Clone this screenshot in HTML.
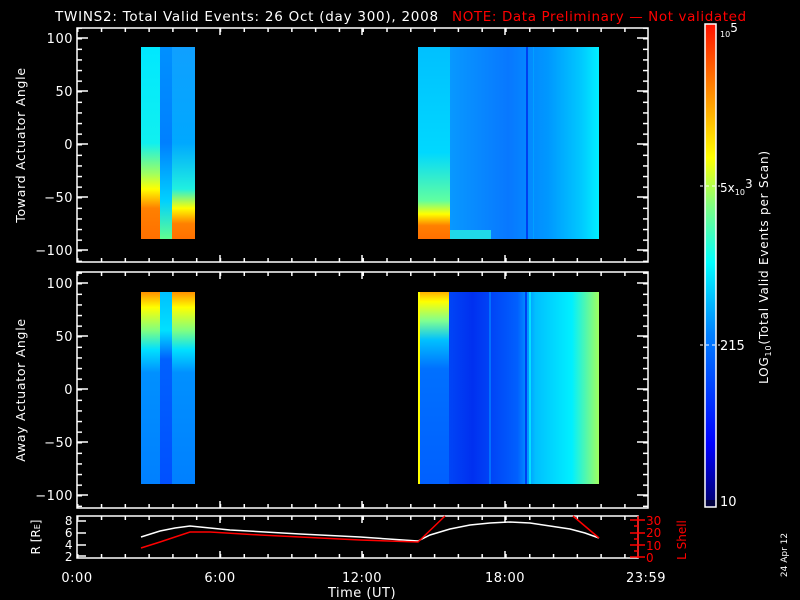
<!DOCTYPE html>
<html><head><meta charset="utf-8"><style>
html,body{margin:0;padding:0;background:#000;width:800px;height:600px;overflow:hidden}
svg{display:block}
text{font-family:"DejaVu Sans","Liberation Sans",sans-serif;fill:#fff}
</style></head><body>
<svg width="800" height="600" viewBox="0 0 800 600" xmlns="http://www.w3.org/2000/svg">
<defs>
<linearGradient id="cb" x1="0" y1="1" x2="0" y2="0">
<stop offset="0" stop-color="#00007a"/><stop offset="0.12" stop-color="#0000ff"/>
<stop offset="0.35" stop-color="#0080ff"/><stop offset="0.5" stop-color="#00ffff"/>
<stop offset="0.62" stop-color="#80ff80"/><stop offset="0.72" stop-color="#ffff00"/>
<stop offset="0.87" stop-color="#ff8000"/><stop offset="1" stop-color="#ff1000"/>
</linearGradient>
<linearGradient id="t1a" x1="0" y1="0" x2="0" y2="1">
<stop offset="0" stop-color="#00e8ff"/><stop offset="0.5" stop-color="#10f0f0"/>
<stop offset="0.66" stop-color="#a0ff60"/><stop offset="0.74" stop-color="#ffff00"/>
<stop offset="0.84" stop-color="#ff8000"/><stop offset="1" stop-color="#ff7000"/>
</linearGradient>
<linearGradient id="t1b" x1="0" y1="0" x2="0" y2="1">
<stop offset="0" stop-color="#0090ff"/><stop offset="0.5" stop-color="#0080ff"/>
<stop offset="0.8" stop-color="#00d0ff"/><stop offset="1" stop-color="#60ff90"/>
</linearGradient>
<linearGradient id="t1c" x1="0" y1="0" x2="0" y2="1">
<stop offset="0" stop-color="#10a0ff"/><stop offset="0.5" stop-color="#00a8ff"/>
<stop offset="0.74" stop-color="#20f0e0"/><stop offset="0.84" stop-color="#ffff00"/>
<stop offset="0.92" stop-color="#ff8000"/><stop offset="1" stop-color="#ff7000"/>
</linearGradient>
<linearGradient id="t2" x1="0" y1="0" x2="1" y2="0">
<stop offset="0" stop-color="#00c8ff"/><stop offset="0.18" stop-color="#0898ff"/>
<stop offset="0.5" stop-color="#0878ff"/><stop offset="0.72" stop-color="#0098ff"/>
<stop offset="0.9" stop-color="#00c8ff"/><stop offset="1" stop-color="#00f0ff"/>
</linearGradient>
<linearGradient id="t2l" x1="0" y1="0" x2="0" y2="1">
<stop offset="0" stop-color="#00c0ff"/><stop offset="0.55" stop-color="#00d8ff"/>
<stop offset="0.8" stop-color="#60ffa0"/><stop offset="0.87" stop-color="#ffff00"/>
<stop offset="0.93" stop-color="#ff8000"/><stop offset="1" stop-color="#ff7000"/>
</linearGradient>
<linearGradient id="fadeL" x1="0" y1="0" x2="1" y2="0">
<stop offset="0" stop-color="#00c8ff" stop-opacity="0"/><stop offset="1" stop-color="#0898ff" stop-opacity="0"/>
</linearGradient>
<linearGradient id="b1" x1="0" y1="0" x2="0" y2="1">
<stop offset="0" stop-color="#ff9000"/><stop offset="0.08" stop-color="#ffff00"/>
<stop offset="0.2" stop-color="#80ff80"/><stop offset="0.3" stop-color="#00e0ff"/>
<stop offset="0.42" stop-color="#0090ff"/><stop offset="1" stop-color="#0080ff"/>
</linearGradient>
<linearGradient id="b1m" x1="0" y1="0" x2="0" y2="1">
<stop offset="0" stop-color="#00c0ff"/><stop offset="0.2" stop-color="#00e0ff"/>
<stop offset="0.35" stop-color="#0060ff"/><stop offset="1" stop-color="#0050ff"/>
</linearGradient>
<linearGradient id="b2" x1="0" y1="0" x2="1" y2="0">
<stop offset="0" stop-color="#0060ff"/><stop offset="0.3" stop-color="#0030f0"/>
<stop offset="0.55" stop-color="#0060ff"/><stop offset="0.65" stop-color="#00c0ff"/>
<stop offset="0.85" stop-color="#00f0ff"/><stop offset="1" stop-color="#a0ff60"/>
</linearGradient>
<linearGradient id="b2l" x1="0" y1="0" x2="0" y2="1">
<stop offset="0" stop-color="#ffb000"/><stop offset="0.05" stop-color="#ffff00"/>
<stop offset="0.15" stop-color="#80ff90"/><stop offset="0.25" stop-color="#00c0ff"/>
<stop offset="0.4" stop-color="#0070ff"/><stop offset="1" stop-color="#0060ff"/>
</linearGradient>
<pattern id="xt" x="77" y="0" width="23.79" height="600" patternUnits="userSpaceOnUse">
<rect x="0" y="0" width="1.5" height="600" fill="#fff"/></pattern>
<pattern id="yt1" x="0" y="38" width="800" height="10.6" patternUnits="userSpaceOnUse">
<rect x="0" y="0" width="800" height="1.5" fill="#fff"/></pattern>
<pattern id="yt2" x="0" y="283" width="800" height="10.6" patternUnits="userSpaceOnUse">
<rect x="0" y="0" width="800" height="1.5" fill="#fff"/></pattern>
</defs>

<text x="55" y="21" font-size="13.5" letter-spacing="0.75">TWINS2: Total Valid Events: 26 Oct (day 300), 2008</text>
<text x="452" y="21" font-size="13.5" letter-spacing="0.6" style="fill:#ff0000">NOTE: Data Preliminary — Not validated</text>

<rect x="141" y="47" width="19" height="192" fill="url(#t1a)"/>
<rect x="160" y="47" width="12" height="192" fill="url(#t1b)"/>
<rect x="172" y="47" width="23" height="192" fill="url(#t1c)"/>
<rect x="418" y="47" width="181" height="192" fill="url(#t2)"/>
<rect x="418" y="47" width="32" height="192" fill="url(#t2l)"/>
<rect x="450" y="230" width="41" height="9" fill="#20d8e8"/>
<rect x="526" y="47" width="2" height="192" fill="#0040f0"/>
<rect x="533" y="47" width="1" height="192" fill="#00a0ff"/>

<rect x="141" y="292" width="54" height="192" fill="url(#b1)"/>
<rect x="160" y="292" width="12" height="192" fill="url(#b1m)"/>
<rect x="418" y="292" width="181" height="192" fill="url(#b2)"/>
<rect x="418" y="292" width="31" height="192" fill="url(#b2l)"/>
<rect x="418" y="292" width="2" height="192" fill="#ffff00"/>
<rect x="489" y="292" width="2" height="192" fill="#0070ff"/>
<rect x="525" y="292" width="2" height="192" fill="#0040f0"/>
<rect x="529" y="292" width="2" height="192" fill="#00e0ff"/>

<g fill="none" stroke="#fff" stroke-width="1.5">
<rect x="77" y="28" width="571" height="234"/>
<rect x="77" y="272" width="571" height="236"/>
<rect x="77" y="516" width="561" height="42"/>
</g>
<rect x="77" y="28" width="5" height="234" fill="url(#yt1)"/>
<rect x="643" y="28" width="5" height="234" fill="url(#yt1)"/>
<rect x="77" y="272" width="5" height="236" fill="url(#yt2)"/>
<rect x="643" y="272" width="5" height="236" fill="url(#yt2)"/>
<g stroke="#fff" stroke-width="1.5">
<line x1="77" y1="38" x2="88" y2="38"/><line x1="77" y1="91" x2="88" y2="91"/><line x1="77" y1="144" x2="88" y2="144"/><line x1="77" y1="197" x2="88" y2="197"/><line x1="77" y1="250" x2="88" y2="250"/>
<line x1="637" y1="38" x2="648" y2="38"/><line x1="637" y1="91" x2="648" y2="91"/><line x1="637" y1="144" x2="648" y2="144"/><line x1="637" y1="197" x2="648" y2="197"/><line x1="637" y1="250" x2="648" y2="250"/>
<line x1="77" y1="283" x2="88" y2="283"/><line x1="77" y1="336" x2="88" y2="336"/><line x1="77" y1="389" x2="88" y2="389"/><line x1="77" y1="442" x2="88" y2="442"/><line x1="77" y1="495" x2="88" y2="495"/>
<line x1="637" y1="283" x2="648" y2="283"/><line x1="637" y1="336" x2="648" y2="336"/><line x1="637" y1="389" x2="648" y2="389"/><line x1="637" y1="442" x2="648" y2="442"/><line x1="637" y1="495" x2="648" y2="495"/>
</g>
<rect x="77" y="28" width="571" height="4" fill="url(#xt)"/>
<rect x="77" y="258" width="571" height="4" fill="url(#xt)"/>
<rect x="77" y="272" width="571" height="4" fill="url(#xt)"/>
<rect x="77" y="504" width="571" height="4" fill="url(#xt)"/>
<rect x="77" y="516" width="561" height="4" fill="url(#xt)"/>
<rect x="77" y="554" width="561" height="4" fill="url(#xt)"/>
<g stroke="#fff" stroke-width="1.5">
<line x1="220" y1="28" x2="220" y2="35"/><line x1="362" y1="28" x2="362" y2="35"/><line x1="505" y1="28" x2="505" y2="35"/>
<line x1="220" y1="255" x2="220" y2="262"/><line x1="362" y1="255" x2="362" y2="262"/><line x1="505" y1="255" x2="505" y2="262"/>
<line x1="220" y1="272" x2="220" y2="279"/><line x1="362" y1="272" x2="362" y2="279"/><line x1="505" y1="272" x2="505" y2="279"/>
<line x1="220" y1="501" x2="220" y2="508"/><line x1="362" y1="501" x2="362" y2="508"/><line x1="505" y1="501" x2="505" y2="508"/>
<line x1="220" y1="516" x2="220" y2="523"/><line x1="362" y1="516" x2="362" y2="523"/><line x1="505" y1="516" x2="505" y2="523"/>
<line x1="220" y1="551" x2="220" y2="558"/><line x1="362" y1="551" x2="362" y2="558"/><line x1="505" y1="551" x2="505" y2="558"/>
<line x1="77" y1="521" x2="86" y2="521"/><line x1="77" y1="533" x2="86" y2="533"/><line x1="77" y1="545" x2="86" y2="545"/><line x1="77" y1="556" x2="86" y2="556"/>
</g>
<g stroke="#ff0000" stroke-width="1.5">
<line x1="638" y1="516" x2="638" y2="558"/>
<line x1="630" y1="520" x2="645" y2="520"/><line x1="630" y1="533" x2="645" y2="533"/><line x1="630" y1="545" x2="645" y2="545"/><line x1="630" y1="557" x2="645" y2="557"/>
<line x1="634" y1="526" x2="638" y2="526"/><line x1="634" y1="539" x2="638" y2="539"/><line x1="634" y1="551" x2="638" y2="551"/>
</g>

<g font-size="13" text-anchor="end" letter-spacing="0.5">
<text x="73" y="43">100</text><text x="73" y="96">50</text><text x="73" y="149">0</text><text x="73" y="202">−50</text><text x="73" y="255">−100</text>
<text x="73" y="288">100</text><text x="73" y="341">50</text><text x="73" y="394">0</text><text x="73" y="447">−50</text><text x="73" y="500">−100</text>
<text x="73" y="525" font-size="12">8</text><text x="73" y="537" font-size="12">6</text><text x="73" y="549" font-size="12">4</text><text x="73" y="561" font-size="12">2</text>
</g>
<g font-size="12">
<text x="646" y="525" style="fill:#ff0000">30</text><text x="646" y="537" style="fill:#ff0000">20</text><text x="646" y="550" style="fill:#ff0000">10</text><text x="646" y="562" style="fill:#ff0000">0</text>
<text transform="translate(686,540) rotate(-90)" text-anchor="middle" font-size="12" style="fill:#ff0000">L Shell</text>
</g>
<text transform="translate(25,145) rotate(-90)" text-anchor="middle" font-size="12.5" letter-spacing="0.7">Toward Actuator Angle</text>
<text transform="translate(25,390) rotate(-90)" text-anchor="middle" font-size="12.5" letter-spacing="0.7">Away Actuator Angle</text>
<text transform="translate(40,537) rotate(-90)" text-anchor="middle" font-size="12">R [R<tspan font-size="8">E</tspan>]</text>

<g font-size="13" text-anchor="middle" letter-spacing="0.5">
<text x="77" y="582">0:00</text><text x="220" y="582">6:00</text><text x="362" y="582">12:00</text><text x="505" y="582">18:00</text><text x="646" y="582">23:59</text>
<text x="362" y="597">Time (UT)</text>
</g>

<polyline fill="none" stroke="#fff" stroke-width="1.5" points="141,537 160,531 175,528 190,526 200,527 230,530 300,534 360,537 418,541 430,535 450,529 470,525 490,523 510,522 530,523 550,526 570,529 585,533 599,538"/>
<polyline fill="none" stroke="#ff0000" stroke-width="1.5" points="141,548 160,542 190,532 210,532 260,535 300,537 360,540 418,542 445,516"/>
<polyline fill="none" stroke="#ff0000" stroke-width="1.5" points="573,516 599,538"/>

<rect x="705" y="24" width="11" height="477" fill="url(#cb)"/>
<rect x="705" y="500" width="11" height="7" fill="#000040"/>
<rect x="705" y="24" width="11" height="483" fill="none" stroke="#fff" stroke-width="1.5"/>
<line x1="700" y1="186" x2="720" y2="186" stroke="#fff" stroke-dasharray="3,3"/>
<line x1="700" y1="345" x2="720" y2="345" stroke="#fff" stroke-dasharray="3,3"/>
<text x="720" y="37" font-size="8">10<tspan font-size="12" dy="-5">5</tspan></text>
<text x="720" y="192" font-size="12">5x<tspan font-size="8" dy="3">10</tspan><tspan font-size="12" dy="-7">3</tspan></text>
<text x="720" y="350" font-size="13">215</text>
<text x="720" y="506" font-size="13">10</text>
<text transform="translate(768,267) rotate(-90)" text-anchor="middle" font-size="12" letter-spacing="0.8">LOG<tspan font-size="8" dy="3">10</tspan><tspan dy="-3">(Total Valid Events per Scan)</tspan></text>
<text transform="translate(787,555) rotate(-90)" text-anchor="middle" font-size="9">24 Apr 12</text>
</svg>
</body></html>
